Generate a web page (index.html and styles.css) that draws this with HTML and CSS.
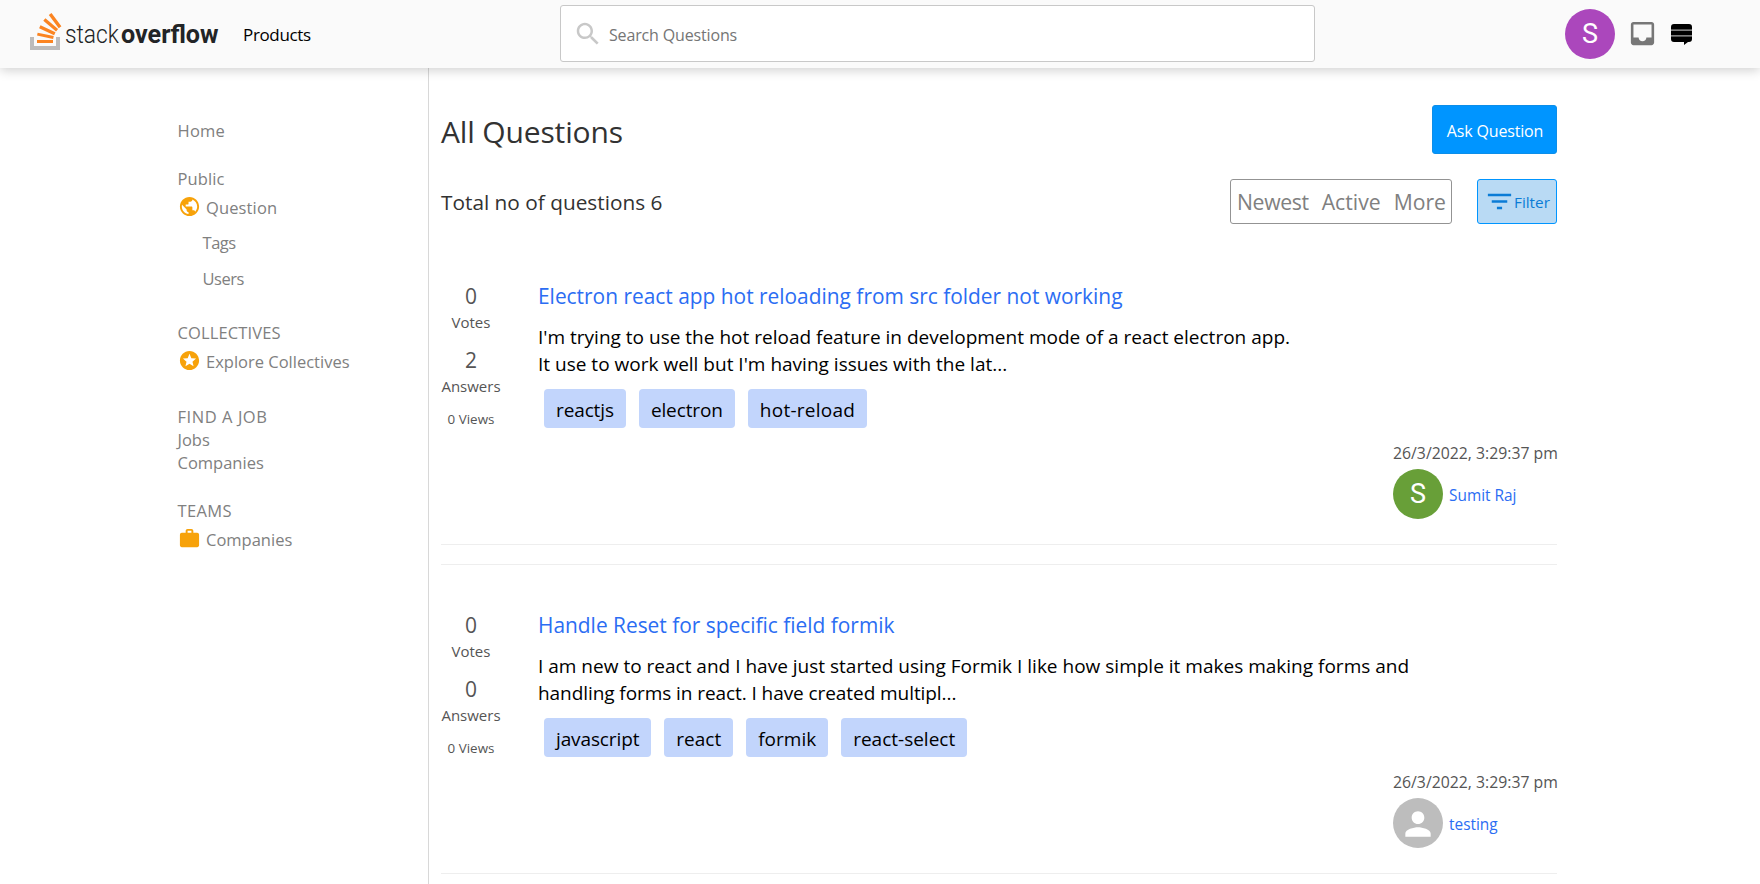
FILE: index.html
```
<!DOCTYPE html>
<html lang="en">
<head>
<meta charset="utf-8">
<title>All Questions</title>
<link rel="stylesheet" href="styles.css">
</head>
<body>
<header class="header">
  <div class="header-left">
    <svg class="logo" width="192" height="42" viewBox="0 0 192 42">
      <path fill="#bcbbbb" d="M26 33v-9h4v13H0V24h4v9h22z"/>
      <path fill="#fb8421" d="M21.5 0l-2.7 2 9.9 13.3 2.7-2L21.5 0zM26 18.4L13.3 7.8l2.1-2.5 12.7 10.6-2.1 2.5zM9.1 15.2l15 7 1.4-3-15-7-1.4 3zM23.1 25.99l.68-2.95-16.1-3.35L7 22.6l16.1 3.39zM23 30H7v-3h16v3z"/>
      <text class="logo-thin" x="35" y="30" textLength="54" lengthAdjust="spacingAndGlyphs">stack</text>
      <text class="logo-bold" x="91" y="30" textLength="97.500" lengthAdjust="spacingAndGlyphs">overflow</text>
    </svg>
    <a class="products">Products</a>
  </div>
  <div class="search">
    <svg width="30" height="30" viewBox="0 0 24 24" fill="#c8c8c8"><path d="M15.500 14h-.79l-.28-.27C15.410 12.590 16 11.110 16 9.500 16 5.910 13.090 3 9.500 3S3 5.910 3 9.500 5.910 16 9.500 16c1.610 0 3.090-.59 4.230-1.570l.27.28v.79l5 4.990L20.490 19l-4.990-5zm-6 0C7.010 14 5 11.990 5 9.500S7.010 5 9.500 5 14 7.010 14 9.500 11.990 14 9.500 14z"/></svg>
    <span class="placeholder">Search Questions</span>
  </div>
  <div class="header-right">
    <span class="avatar purple">S</span>
    <svg class="inbox" width="31" height="31" viewBox="0 0 24 24" fill="#777"><path d="M19 3H4.990c-1.110 0-1.980.89-1.980 2L3 19c0 1.100.88 2 1.990 2H19c1.100 0 2-.9 2-2V5c0-1.110-.9-2-2-2zm0 12h-4c0 1.660-1.350 3-3 3s-3-1.340-3-3H4.990V5H19v10z"/></svg>
    <svg class="exchange" width="21" height="21" viewBox="0 0 21 21"><path d="M3 0h15a3 3 0 0 1 3 3v12a3 3 0 0 1-3 3h-1l-4 3v-3H3a3 3 0 0 1-3-3V3a3 3 0 0 1 3-3z"/><path fill="#a8a8a8" d="M0 5.500h21v1.300H0zM0 11.200h21v1.300H0z"/></svg>
  </div>
</header>
<div class="page">
  <nav class="sidebar">
    <a class="item home">Home</a>
    <div class="group">
      <span class="item wide">Public</span>
      <a class="item icon-item wide"><svg width="23" height="23" viewBox="0 0 24 24"><path d="M12 2C6.480 2 2 6.480 2 12s4.480 10 10 10 10-4.480 10-10S17.520 2 12 2zm-1 17.930c-3.950-.49-7-3.850-7-7.930 0-.62.08-1.210.21-1.790L9 15v1c0 1.100.9 2 2 2v1.930zm6.900-2.540c-.26-.81-1-1.390-1.900-1.390h-1v-3c0-.55-.45-1-1-1H8v-2h2c.55 0 1-.45 1-1V7h2c1.100 0 2-.9 2-2v-.41c2.930 1.190 5 4.060 5 7.410 0 2.080-.8 3.970-2.100 5.390z"/></svg>Question</a>
      <a class="item sub tags-link">Tags</a>
      <a class="item sub users-link">Users</a>
    </div>
    <div class="group collectives">
      <span class="item wide">COLLECTIVES</span>
      <a class="item icon-item"><svg width="23" height="23" viewBox="0 0 24 24"><path d="M11.990 2C6.470 2 2 6.480 2 12s4.470 10 9.990 10C17.520 22 22 17.520 22 12S17.520 2 11.990 2zm4.240 16L12 15.450 7.770 18l1.120-4.810-3.730-3.230 4.920-.42L12 5l1.920 4.530 4.920.42-3.730 3.230L16.230 18z"/></svg>Explore Collectives</a>
    </div>
    <div class="group jobs">
      <span class="item job-title">FIND A JOB</span>
      <a class="item">Jobs</a>
      <a class="item">Companies</a>
    </div>
    <div class="group teams">
      <span class="item team-title">TEAMS</span>
      <a class="item icon-item"><svg width="23" height="23" viewBox="0 0 24 24"><path d="M20 6h-4V4c0-1.110-.89-2-2-2h-4c-1.110 0-2 .89-2 2v2H4c-1.110 0-1.990.89-1.990 2L2 19c0 1.110.89 2 2 2h16c1.110 0 2-.89 2-2V8c0-1.110-.89-2-2-2zm-6 0h-4V4h4v2z"/></svg>Companies</a>
    </div>
  </nav>
  <main class="main">
    <div class="title-row">
      <h1>All Questions</h1>
      <button class="ask">Ask Question</button>
    </div>
    <div class="filter-row">
      <p class="total">Total no of questions 6</p>
      <div class="controls">
        <div class="tabs"><a class="newest">Newest</a><a>Active</a><a>More</a></div>
        <div class="filter"><svg width="31" height="31" viewBox="0 0 24 24"><path d="M10 18h4v-2h-4v2zM3 6v2h18V6H3zm3 7h12v-2H6v2z"/></svg><span>Filter</span></div>
      </div>
    </div>

    <article class="question first">
      <div class="stats">
        <span class="num">0</span><span class="label">Votes</span>
        <span class="num second">2</span><span class="label">Answers</span>
        <small>0 Views</small>
      </div>
      <div class="content">
        <a class="question-title">Electron react app hot reloading from src folder not working</a>
        <p class="body">I'm trying to use the hot reload feature in development mode of a react electron app.<br>It use to work well but I'm having issues with the lat...</p>
        <div class="tags"><span class="tight">reactjs</span><span class="tight">electron</span><span class="loose">hot-reload</span></div>
        <div class="author">
          <span class="date">26/3/2022, 3:29:37 pm</span>
          <div class="user"><span class="avatar green">S</span><a>Sumit Raj</a></div>
        </div>
      </div>
    </article>

    <article class="question">
      <div class="stats">
        <span class="num">0</span><span class="label">Votes</span>
        <span class="num second">0</span><span class="label">Answers</span>
        <small>0 Views</small>
      </div>
      <div class="content">
        <a class="question-title">Handle Reset for specific field formik</a>
        <p class="body">I am new to react and I have just started using Formik I like how simple it makes making forms and<br><span class="snug">handling forms in react. I have created multipl...</span></p>
        <div class="tags"><span class="tight">javascript</span><span>react</span><span>formik</span><span>react-select</span></div>
        <div class="author">
          <span class="date">26/3/2022, 3:29:37 pm</span>
          <div class="user"><span class="avatar gray"><svg width="38" height="38" viewBox="0 0 24 24" fill="#fff"><path d="M12 12c2.210 0 4-1.790 4-4s-1.790-4-4-4-4 1.790-4 4 1.790 4 4 4zm0 2c-2.670 0-8 1.340-8 4v2h16v-2c0-2.660-5.330-4-8-4z"/></svg></span><a>testing</a></div>
        </div>
      </div>
    </article>
  </main>
</div>
</body>
</html>
```
FILE: styles.css
```
* { box-sizing: border-box; }

body {
  margin: 0;
  height: 884px;
  overflow: hidden;
  background: #fff;
  font-family: "Open Sans", "Noto Sans", sans-serif;
  color: #000;
}

h1, p { margin: 0; font-weight: 400; }
svg { flex: none; display: block; }

/* Header */
.header {
  position: relative;
  display: flex;
  height: 68px;
  background: #fafafa;
  box-shadow: 0 2px 11px rgba(0, 0, 0, .2);
}
.header-left {
  display: flex;
  width: 560px;
  padding: 13px 0 0 30px;
}
.logo-thin, .logo-bold { font-family: Roboto, sans-serif; font-size: 26px; fill: #222426; }
.logo-thin { font-weight: 300; }
.logo-bold { font-weight: 700; }
.products {
  margin: 10px 0 0 21px;
  font-size: 17px;
  line-height: 24px;
  letter-spacing: -.35px;
}
.search {
  display: flex;
  align-items: center;
  width: 755px;
  height: 57px;
  margin-top: 5px;
  padding-left: 12px;
  background: #fff;
  border: 1px solid #c8c8c8;
  border-radius: 3px;
}
.placeholder {
  margin: 2px 0 0 6px;
  font-size: 16px;
  letter-spacing: -.15px;
  color: #757575;
}
.header-right { display: flex; padding: 9px 0 0 250px; }
.inbox { margin: 9px 0 0 12px; }
.exchange { margin: 15px 0 0 13px; }

.avatar {
  display: flex;
  flex: none;
  align-items: center;
  justify-content: center;
  width: 50px;
  height: 50px;
  padding-top: 1px;
  border-radius: 50%;
  font: 27px/49px Roboto, sans-serif;
  color: #fff;
}
.purple { background: #ab47bc; }
.green { background: #689f38; }
.gray { background: #bdbdbd; }

/* Page */
.page { display: flex; height: 816px; }

.sidebar {
  width: 429px;
  padding: 51px 0 0 177.5px;
  border-right: 1px solid #d8d8d8;
  font-size: 16.5px;
  line-height: 23px;
  color: #808080;
}
.group { display: flex; flex-direction: column; }
.item { display: block; }
.home { margin-bottom: 25px; letter-spacing: .25px; }
.wide { letter-spacing: .13px; }
.icon-item { display: flex; gap: 5px; margin-top: 6px; }
.icon-item svg { margin: -1px 0 1px .5px; fill: #f7a20a; }
.sub { padding-left: 25px; letter-spacing: -.45px; }
.tags-link { margin-top: 12px; }
.users-link { margin-top: 13px; }
.collectives { margin-top: 31px; }
.jobs { margin-top: 32px; }
.job-title { letter-spacing: .55px; }
.teams { margin-top: 25px; }
.team-title { letter-spacing: .35px; }

.main { width: 1128px; padding: 37px 0 0 12px; }
.title-row { display: flex; justify-content: space-between; height: 49px; }
h1 {
  padding-top: 7px;
  font-size: 30px;
  line-height: 40px;
  letter-spacing: -.15px;
  color: #323232;
}
.ask {
  width: 125px;
  height: 49px;
  padding: 2px 0 0 1px;
  border: 1px solid #0c8ee9;
  border-radius: 3px;
  background: #0095ff;
  color: #fff;
  font: 16px "Open Sans", sans-serif;
  letter-spacing: -.17px;
}
.filter-row {
  display: flex;
  align-items: center;
  justify-content: space-between;
  height: 45px;
  margin-top: 25px;
}
.total { font-size: 20.8px; color: #323232; }
.controls { display: flex; gap: 25px; }
.tabs {
  display: flex;
  align-items: center;
  gap: 13px;
  width: 222px;
  height: 45px;
  padding-left: 6px;
  border: 1px solid #939393;
  border-radius: 3px;
  font-size: 21.2px;
  color: #808080;
}
.newest { letter-spacing: -.35px; }
.filter {
  display: flex;
  align-items: center;
  width: 80px;
  height: 45px;
  padding-left: 6px;
  border: 1px solid #0095ff;
  border-radius: 3px;
  background: #b9daf4;
  color: #0b7cd6;
  font-size: 15.3px;
}
.filter svg { fill: #0b7cd6; margin-top: -1px; }
.filter span { margin-left: -1px; }

/* Questions */
.question {
  display: flex;
  height: 310px;
  margin-top: 19px;
  padding-top: 46px;
  border-top: 1px solid #eee;
  border-bottom: 1px solid #eee;
}
.question.first { margin-top: 11px; border-top-color: transparent; }
.stats {
  display: flex;
  flex-direction: column;
  align-items: center;
  width: 60px;
  color: #555;
}
.num { font-size: 21px; line-height: 28px; }
.second { margin-top: 14px; }
.label { margin-top: 2px; font-size: 15px; line-height: 20px; }
.stats small { margin-top: 14px; font-size: 13.4px; line-height: 18px; }

.content { flex: 1; padding-left: 37px; }
.question-title {
  display: block;
  font-size: 20.9px;
  line-height: 28px;
  color: #2b6df3;
}
.body { margin-top: 14px; font-size: 19.03px; line-height: 27px; white-space: nowrap; }
.snug { letter-spacing: -.08px; }
.tags { display: flex; gap: 13px; margin: 11px 0 0 6px; }
.tags span {
  height: 39px;
  padding: 2px 12px 0;
  border-radius: 4px;
  background: #c2d5fc;
  font-size: 19px;
  line-height: 38px;
}
.tags .tight { letter-spacing: -.12px; }
.tags .loose { letter-spacing: .25px; }
.author {
  display: flex;
  flex-direction: column;
  width: 164px;
  margin: 14px 0 0 auto;
}
.date { font-size: 15.8px; line-height: 22px; color: #555; white-space: nowrap; }
.user { display: flex; align-items: center; gap: 6px; margin-top: 5px; }
.user a { padding-top: 2px; font-size: 15.4px; color: #2b6df3; }
```
